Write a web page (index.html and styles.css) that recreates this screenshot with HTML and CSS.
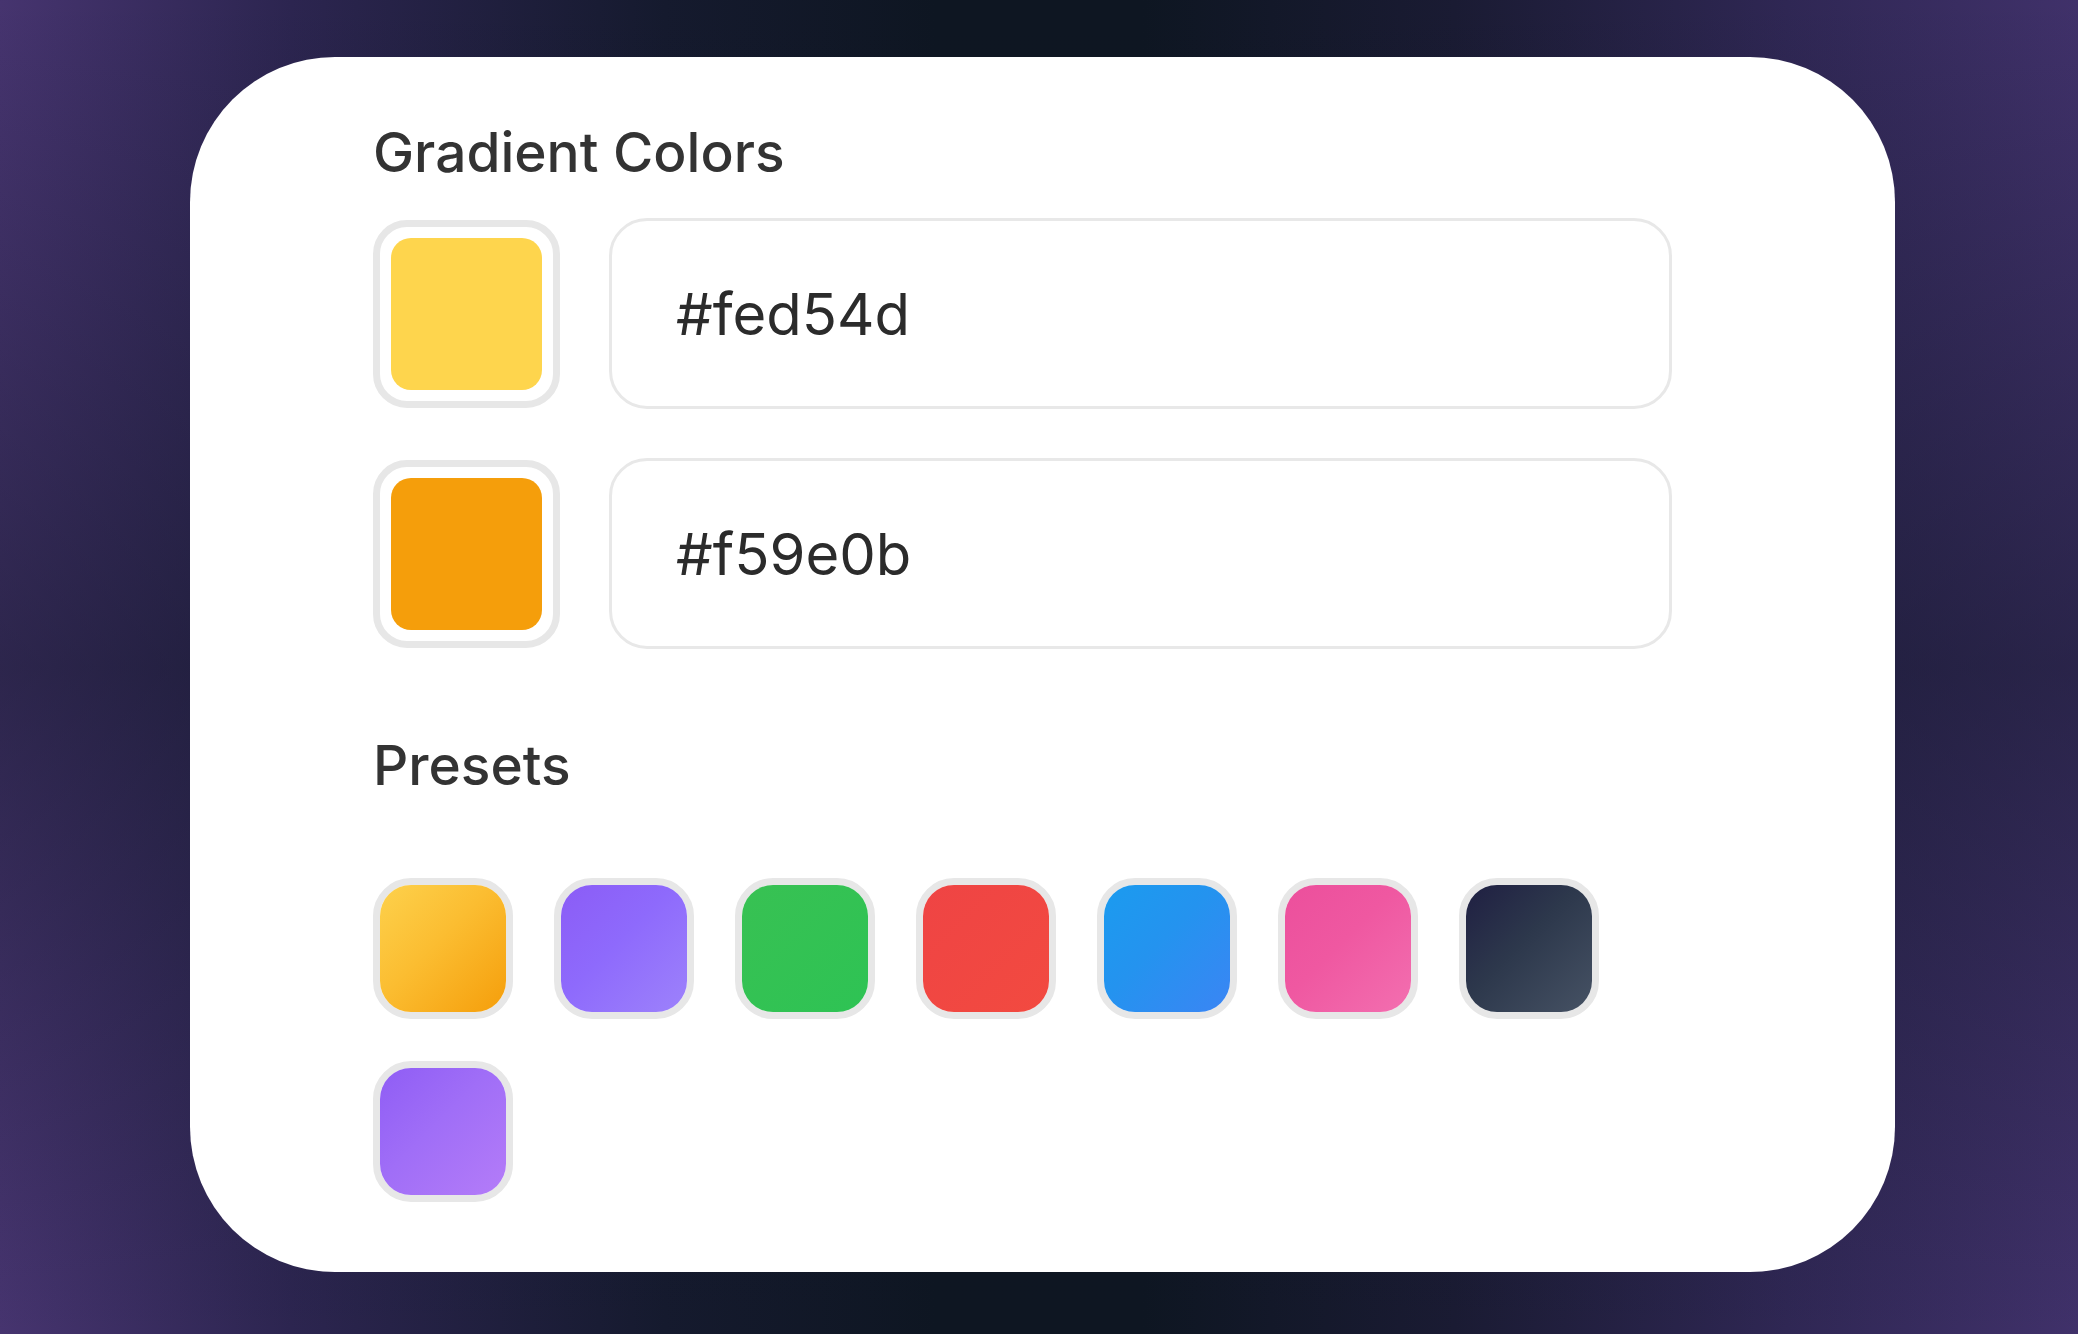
FILE: index.html
```html
<!DOCTYPE html>
<html lang="en">
<head>
<meta charset="utf-8">
<title>Gradient Colors</title>
<link rel="stylesheet" href="styles.css">
</head>
<body>
  <div class="card">
    <h2 class="label">Gradient Colors</h2>
    <div class="color-rows">
      <div class="color-row">
        <div class="swatch-box"><div class="swatch sw-a"></div></div>
        <div class="hex-input">#fed54d</div>
      </div>
      <div class="color-row">
        <div class="swatch-box"><div class="swatch sw-b"></div></div>
        <div class="hex-input">#f59e0b</div>
      </div>
    </div>
    <h2 class="label presets-label">Presets</h2>
    <div class="presets">
      <div class="preset"><div class="preset-fill p-amber"></div></div>
      <div class="preset"><div class="preset-fill p-violet"></div></div>
      <div class="preset"><div class="preset-fill p-green"></div></div>
      <div class="preset"><div class="preset-fill p-red"></div></div>
      <div class="preset"><div class="preset-fill p-blue"></div></div>
      <div class="preset"><div class="preset-fill p-pink"></div></div>
      <div class="preset"><div class="preset-fill p-slate"></div></div>
      <div class="preset"><div class="preset-fill p-purple"></div></div>
    </div>
  </div>
</body>
</html>
```

FILE: styles.css
```css
* { box-sizing: border-box; }

html, body { margin: 0; }

body {
  width: 2078px;
  height: 1334px;
  overflow: hidden;
  padding: 57px 0 0 190px;
  font-family: Inter, "Noto Sans", sans-serif;
  background:
    linear-gradient(to bottom, rgba(14, 20, 34, 0) 0%, rgba(14, 20, 34, 0.45) 50%, rgba(14, 20, 34, 0) 100%),
    linear-gradient(to right, #46346f 0%, #2c2550 14%, #151a2e 32%, #0e1622 45%, #0e1622 55%, #1a1b33 70%, #2f2754 86%, #40316a 100%);
}

.card {
  width: 1705px;
  height: 1215px;
  background: #ffffff;
  border-radius: 145px;
  padding: 62px 223px 0 183px;
}

.label {
  margin: 0;
  font-size: 55px;
  line-height: 66px;
  font-weight: 500;
  color: #333333;
}

.color-rows {
  margin-top: 33px;
  display: flex;
  flex-direction: column;
  gap: 49px;
}

.color-row {
  display: flex;
  align-items: center;
  gap: 49px;
  height: 191px;
}

.swatch-box {
  flex: none;
  width: 187px;
  height: 188px;
  border: 7px solid #e7e7e7;
  border-radius: 34px;
  padding: 11px;
  background: #ffffff;
}

.swatch {
  width: 100%;
  height: 100%;
  border-radius: 20px;
}

.sw-a { background: #fed54d; }
.sw-b { background: #f59e0b; }

.hex-input {
  flex: 1;
  height: 191px;
  border: 3px solid #e8e8e8;
  border-radius: 38px;
  padding-left: 64px;
  display: flex;
  align-items: center;
  font-size: 58px;
  font-weight: 400;
  color: #2b2b2b;
}

.presets-label {
  margin-top: 83px;
}

.presets {
  margin-top: 80px;
  display: flex;
  flex-wrap: wrap;
  gap: 42px 41px;
}

.preset {
  width: 140px;
  height: 141px;
  border: 7px solid #e7e7e7;
  border-radius: 38px;
  background: #ffffff;
}

.preset-fill {
  width: 100%;
  height: 100%;
  border-radius: 31px;
}

.p-amber  { background: linear-gradient(135deg, #fdd14c 0%, #fbbd31 45%, #f59e0b 100%); }
.p-violet { background: linear-gradient(135deg, #8b5cf6 0%, #8e6afc 45%, #9d82fb 100%); }
.p-green  { background: linear-gradient(135deg, #38c153 0%, #2ec354 100%); }
.p-red    { background: linear-gradient(135deg, #ef4444 0%, #f24a40 100%); }
.p-blue   { background: linear-gradient(135deg, #1b9bef 0%, #2493ef 45%, #3b85f4 100%); }
.p-pink   { background: linear-gradient(135deg, #ec4f9c 0%, #ef58a1 45%, #f36fb0 100%); }
.p-slate  { background: linear-gradient(135deg, #1f1f42 0%, #2d384c 45%, #465264 100%); }
.p-purple { background: linear-gradient(135deg, #8f5df5 0%, #a06ef7 45%, #b47cf8 100%); }
```
